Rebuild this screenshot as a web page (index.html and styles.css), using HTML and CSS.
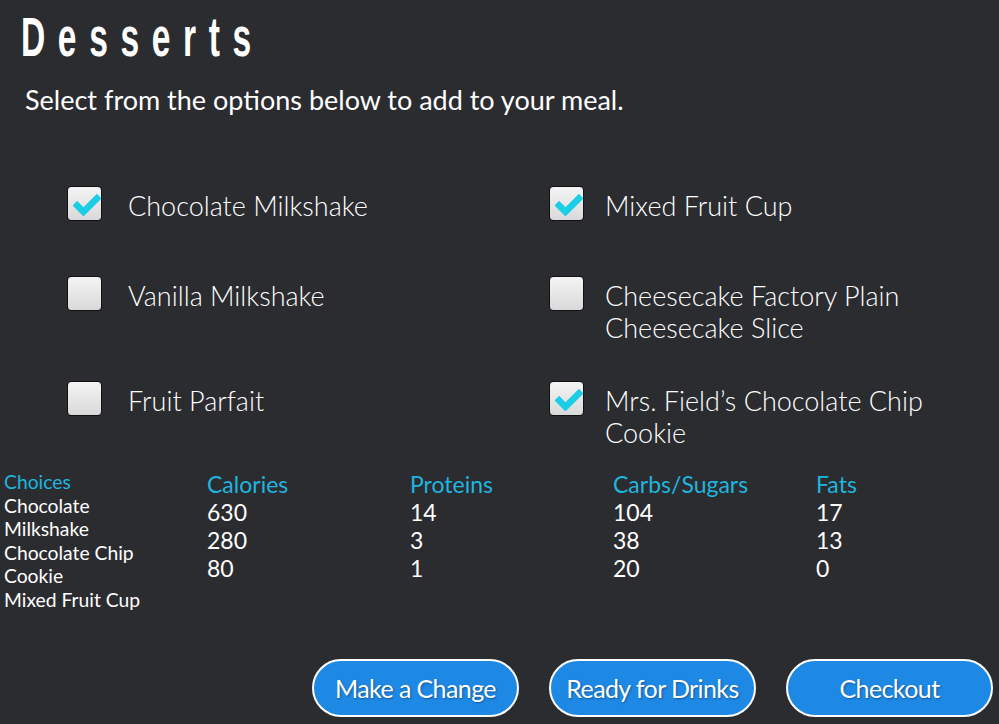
FILE: index.html
```html
<!DOCTYPE html>
<html lang="en">
<head>
    <meta charset="UTF-8">
    <meta name="viewport" content="width=device-width, initial-scale=1.0">
    <title>Desserts</title>
    <link rel="stylesheet" href="styles.css">
</head>
<body>
    <div class="page">
        <h1 class="title"><span>Desserts</span></h1>
        <p class="subtitle">Select from the options below to add to your meal.</p>

        <form class="options">
            <label class="option">
                <input type="checkbox" checked>
                <span class="box"></span>
                <span class="option-text">Chocolate Milkshake</span>
            </label>
            <label class="option">
                <input type="checkbox" checked>
                <span class="box"></span>
                <span class="option-text">Mixed Fruit Cup</span>
            </label>
            <label class="option">
                <input type="checkbox">
                <span class="box"></span>
                <span class="option-text">Vanilla Milkshake</span>
            </label>
            <label class="option">
                <input type="checkbox">
                <span class="box"></span>
                <span class="option-text">Cheesecake Factory Plain Cheesecake Slice</span>
            </label>
            <label class="option">
                <input type="checkbox">
                <span class="box"></span>
                <span class="option-text">Fruit Parfait</span>
            </label>
            <label class="option">
                <input type="checkbox" checked>
                <span class="box"></span>
                <span class="option-text">Mrs. Field’s Chocolate Chip Cookie</span>
            </label>
        </form>

        <div class="summary">
            <div class="col choices">
                <div class="col-head">Choices</div>
                <div>Chocolate Milkshake</div>
                <div>Chocolate Chip Cookie</div>
                <div>Mixed Fruit Cup</div>
            </div>
            <div class="col">
                <div class="col-head">Calories</div>
                <div>630</div>
                <div>280</div>
                <div>80</div>
            </div>
            <div class="col">
                <div class="col-head">Proteins</div>
                <div>14</div>
                <div>3</div>
                <div>1</div>
            </div>
            <div class="col">
                <div class="col-head">Carbs/Sugars</div>
                <div>104</div>
                <div>38</div>
                <div>20</div>
            </div>
            <div class="col">
                <div class="col-head">Fats</div>
                <div>17</div>
                <div>13</div>
                <div>0</div>
            </div>
        </div>

        <div class="actions">
            <button type="button" class="btn">Make a Change</button>
            <button type="button" class="btn">Ready for Drinks</button>
            <button type="button" class="btn">Checkout</button>
        </div>
    </div>
</body>
</html>
```

FILE: styles.css
```css
/* Dark dessert picker screen */
html, body {
    margin: 0;
    height: 100%;
}

body {
    background-color: #2b2c30;
    color: #ffffff;
    font-family: Lato, "Open Sans", sans-serif;
    overflow: hidden;
}

.page {
    display: flex;
    flex-direction: column;
    height: 724px;
}

/* no condensed face installed, so squeeze the bold one */
.title {
    margin: 6px 0 0 21px;
    font-family: "Liberation Sans", Arial, sans-serif;
    font-weight: bold;
    font-size: 56px;
    line-height: 62px;
    letter-spacing: 21px;
}

.title span {
    display: inline-block;
    transform: scaleX(0.6);
    transform-origin: left center;
}

.subtitle {
    margin: 16px 0 0 25px;
    font-size: 27px;
    line-height: 32px;
}

/* checkbox grid */
.options {
    display: grid;
    grid-template-columns: 482px 1fr;
    grid-template-rows: 90px 105px auto;
    margin: 70px 0 0 67px;
}

.option {
    display: flex;
    align-items: flex-start;
    gap: 26px;
    cursor: pointer;
}

.option:nth-child(even) {
    gap: 21px;
}

.option input {
    display: none;
}

.box {
    flex: none;
    position: relative;
    width: 33px;
    height: 33px;
    border: 1px solid #111;
    border-radius: 4px;
    background: linear-gradient(#f4f4f4, #d9d9d9);
}

.option input:checked + .box::after {
    content: "";
    position: absolute;
    left: 11px;
    top: 2px;
    width: 9px;
    height: 19px;
    border: solid #1ccde6;
    border-width: 0 7px 7px 0;
    border-radius: 2px;
    transform: rotate(45deg);
}

.option-text {
    padding-top: 4px;
    font-weight: 300;
    font-size: 27px;
    line-height: 32px;
    max-width: 320px;
}

/* nutrition summary */
.summary {
    display: grid;
    grid-template-columns: repeat(4, 203px) 1fr;
    margin: 21px 0 0 4px;
}

.col {
    font-size: 23px;
    line-height: 28px;
}

.col-head {
    color: #20b4df;
}

.choices {
    font-size: 19.3px;
    line-height: 23.5px;
    width: 150px;
}

/* bottom buttons */
.actions {
    margin-top: auto;
    display: flex;
    justify-content: flex-end;
    gap: 30px;
    padding: 0 6px 7px 0;
}

.btn {
    width: 207px;
    height: 58px;
    border: 2px solid #ffffff;
    border-radius: 30px;
    background-color: #1e88e5;
    color: #ffffff;
    font-family: Lato, sans-serif;
    font-size: 25px;
    letter-spacing: -0.6px;
    text-shadow: 1px 1px 2px rgba(0, 0, 0, 0.35);
    cursor: pointer;
}
```
